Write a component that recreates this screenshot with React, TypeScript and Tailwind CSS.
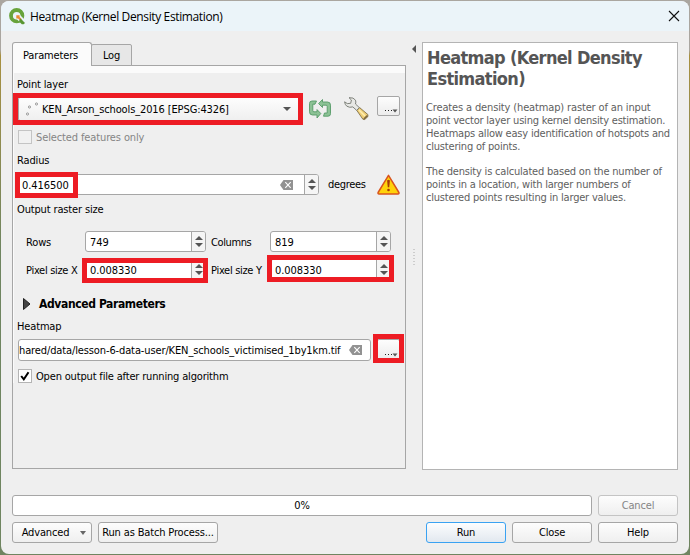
import type { ReactNode } from 'react';

const ui = "font-['DejaVu_Sans_Condensed','DejaVu_Sans',sans-serif] [font-stretch:condensed] tracking-[-0.15px]";
const btn = 'flex items-center justify-center h-[21px] rounded-[3px] border border-[#a6a6a6] bg-linear-to-b from-[#fdfdfd] to-[#efefef]';

function T({ children, className = '' }: { children: ReactNode; className?: string }) {
  return <span className={`whitespace-nowrap ${className}`}>{children}</span>;
}

function Mark({ className }: { className: string }) {
  return <div className={`absolute z-10 border-[5px] border-[#ed1c24] ${className}`} />;
}

function Spin({ value, clear, className }: { value: string; clear?: boolean; className: string }) {
  return (
    <div className={`relative flex h-[21px] rounded-[3px] border border-[#a6a6a6] bg-white ${className}`}>
      <div className="flex flex-1 items-center pt-px pl-1">
        <T className="tracking-[-0.05px]">{value}</T>
      </div>
      {clear && <div className="mr-[11px] flex items-center"><Clear /></div>}
      <div className="flex w-[14px] flex-col items-center justify-center gap-[3px] rounded-r-[2px] border-l border-[#a6a6a6] bg-[#f5f5f5]">
        <svg width="8" height="4"><path d="M0 4L4 0L8 4Z" fill="#555" /></svg>
        <svg width="8" height="4"><path d="M0 0L4 4L8 0Z" fill="#555" /></svg>
      </div>
    </div>
  );
}

function Clear() {
  return (
    <svg width="13" height="10" viewBox="0 0 13 10">
      <path d="M0 5L3.5 0H13V10H3.5Z" fill="#929292" />
      <path d="M5.3 2.2L10.7 7.8M10.7 2.2L5.3 7.8" stroke="#fff" strokeWidth="1.1" />
    </svg>
  );
}

function Dots({ className = '' }: { className?: string }) {
  return (
    <div className={`relative rounded-[2px] border border-[#a6a6a6] bg-linear-to-b from-[#fdfdfd] to-[#ececec] ${className}`}>
      <svg className="absolute right-[1px] bottom-[2px]" width="14" height="5">
        <path d="M1 2.5h1M4 2.5h1M7 2.5h1" stroke="#222" />
        <path d="M8.5 1.5h5L11 4.5Z" fill="#555" />
      </svg>
    </div>
  );
}

function Check({ on }: { on?: boolean }) {
  return (
    <div className={`flex size-[14px] items-center justify-center border ${on ? 'border-[#b4b4b4] bg-white' : 'border-[#c4c4c4] bg-[#f1f1f1]'}`}>
      {on && <svg width="10" height="10"><path d="M1.2 5L3.8 8.3L8.5 1.2" fill="none" stroke="#000" strokeWidth="2" /></svg>}
    </div>
  );
}

function Logo() {
  return (
    <svg width="17" height="17" viewBox="0 0 17 17">
      <circle cx="7.7" cy="7.7" r="5.7" fill="none" stroke="#67a33b" strokeWidth="3.8" />
      <path d="M7 7h4l6 6v3.5h-3.5L7 10.5Z" fill="#ebf3f9" />
      <path d="M7.3 7.3h3.3v1.8l2.2 2.2-1.5 1.5-2.2-2.2H7.3Z" fill="#e98a32" />
      <path d="M11.6 10.6l4.4 4.5-1.4 1.2h-1.8l-3-3Z" fill="#589632" />
    </svg>
  );
}

function Refresh() {
  return (
    <svg width="22" height="20" viewBox="0 0 22 20">
      <g fill="#8cc295" stroke="#559a66" strokeWidth=".9" strokeLinejoin="round">
        <path d="M7.5 2H3Q.5 2 .5 4.5V12.8Q.5 16 3.5 16H8V19L11.8 14.5L8 10.6V12.8H5Q3.8 12.8 3.8 11.6V5.2H6Z" />
        <path d="M14.5 17.2H19Q21.5 17.2 21.5 14.7V6.2Q21.5 3 18.5 3H13.5V.5L9.6 4.6L13.5 8.5V6.2H17Q18.2 6.2 18.2 7.4V14H15.5Z" />
      </g>
    </svg>
  );
}

function Wrench() {
  return (
    <svg width="25" height="24" viewBox="0 0 25 24">
      <path d="M12.8 13.4L15.6 10.6L23.9 17.6V19.6L20.8 22.4H19Z" fill="#f0d078" stroke="#80714d" strokeWidth=".9" strokeLinejoin="round" />
      <path d="M15 13L21 19" stroke="#ffeeb0" strokeWidth="1.6" />
      <path d="M19.8 22L23.5 18.6" stroke="#7d6840" strokeWidth="1.6" />
      <path d="M5 .7Q9.7 .2 11.5 3.2Q12.2 5 11.5 7L15.3 10.6L12.7 13.4L8.8 9.9Q5.6 11 2.8 9.2Q.8 7.6 .6 4.8L3.3 6.6L6.7 6.3L7.4 3Z" fill="#e7e8e5" stroke="#74776f" strokeWidth=".9" strokeLinejoin="round" />
    </svg>
  );
}

function Warning() {
  return (
    <svg width="23" height="21" viewBox="0 0 23 21">
      <path d="M11.5 1.3L21.9 18.5Q22.3 20 21 20H2Q.7 20 1.1 18.5Z" fill="#ffd20a" stroke="#d9541e" strokeWidth="1.5" strokeLinejoin="round" />
      <path d="M10.1 6.5Q11.5 5.2 12.9 6.5L12.2 13.3H10.8Z" fill="#a63b08" />
      <circle cx="11.5" cy="16" r="1.3" fill="#a63b08" />
    </svg>
  );
}

function Parameters() {
  return (
    <div className="relative h-[404px] w-[394px] border border-[#a6a6a6] bg-[#efefef]">
      <div className="h-[7px] bg-[#fbfbfb]" />
      <div className="flex flex-col border-l border-[#fbfbfb] pl-[3px]">
        <div className="flex h-[23px] items-center"><T>Point layer</T></div>
        <div className="flex h-[34px]">
          <div className="mt-[1px] ml-px flex h-[24px] w-[283px] items-center rounded-[2px] border border-[#a6a6a6] bg-linear-to-b from-[#fdfdfd] to-[#efefef]">
            <svg className="ml-[6px]" width="14" height="14" fill="#f5f5f5" stroke="#999">
              <circle cx="4.5" cy="5" r="1.1" /><circle cx="11.5" cy="2" r="1.1" /><circle cx="2.5" cy="12" r="1.1" />
            </svg>
            <T className="ml-[3px] tracking-[-0.12px]">KEN_Arson_schools_2016 [EPSG:4326]</T>
            <svg className="mr-[9px] ml-auto" width="8" height="4"><path d="M0 0h8L4 4Z" fill="#555" /></svg>
          </div>
          <div className="mt-[3px] ml-[8px]"><Refresh /></div>
          <div className="mt-[1px] ml-[13px]"><Wrench /></div>
          <Dots className="ml-[8px] h-[20px] w-[23px]" />
        </div>
        <div className="flex h-[14px] items-center gap-[4px] pl-px text-[#858585]"><Check /><T className="tracking-[-0.12px]">Selected features only</T></div>
        <div className="flex h-[30px] items-end pb-[7px]"><T>Radius</T></div>
        <div className="flex h-[22px] items-start">
          <Spin value="0.416500" clear className="w-[302px]" />
          <T className="mt-[4px] ml-[9px] w-[49px] tracking-[-0.3px]">degrees</T>
          <Warning />
        </div>
        <div className="flex h-[26px] items-center"><T>Output raster size</T></div>
        <div className="mt-[9px] flex h-[21px] items-center pl-[9px]">
          <T className="w-[59px] pt-px">Rows</T><Spin value="749" className="w-[121px]" />
          <T className="ml-[5px] w-[59px] pt-px tracking-[-0.4px]">Columns</T><Spin value="819" className="w-[121px]" />
        </div>
        <div className="mt-[7px] flex h-[21px] items-center pl-[9px]">
          <T className="w-[59px] pt-px tracking-[-0.3px]">Pixel size X</T><Spin value="0.008330" className="w-[121px]" />
          <T className="ml-[5px] w-[59px] pt-px tracking-[-0.3px]">Pixel size Y</T><Spin value="0.008330" className="w-[121px]" />
        </div>
        <div className="mt-[12px] flex h-[24px] items-center pl-[6px] font-bold">
          <svg width="8" height="12"><path d="M.5 .5L7 6L.5 11.5Z" fill="#444" stroke="#222" /></svg>
          <T className="ml-[8px] text-[12px] tracking-[-0.38px]">Advanced Parameters</T>
        </div>
        <div className="flex h-[22px] items-center pb-px"><T>Heatmap</T></div>
        <div className="mt-px flex h-[22px]">
          <div className="ml-px flex w-[353px] items-center overflow-hidden rounded-[3px] border border-[#a6a6a6] bg-white">
            <T className="tracking-[-0.12px]">hared/data/lesson-6-data-user/KEN_schools_victimised_1by1km.tif</T>
            <div className="mr-[8px] ml-auto"><Clear /></div>
          </div>
          <Dots className="ml-[6px] h-[21px] w-[23px]" />
        </div>
        <div className="mt-[8px] flex h-[14px] items-center gap-[4px] pl-px"><Check on /><T className="tracking-[-0.17px]">Open output file after running algorithm</T></div>
      </div>
      <Mark className="top-[27px] left-0 h-[32px] w-[290px]" />
      <Mark className="top-[106px] left-[2px] h-[26px] w-[63px]" />
      <Mark className="top-[192px] left-[69px] h-[25px] w-[126px]" />
      <Mark className="top-[189px] left-[254px] h-[27px] w-[127px]" />
      <Mark className="top-[268px] left-[360px] h-[29px] w-[31px]" />
    </div>
  );
}

export default function App() {
  return (
    <div className="h-[555px] w-[690px] overflow-hidden bg-linear-to-b from-[#aaa6a0] from-9% via-[#a8903f] via-10% to-[#6f8560] to-45% pt-px pl-px">
      <div className={`flex h-[553px] w-[688px] flex-col overflow-hidden rounded-[8px] bg-[#efefef] text-[11px] leading-[13px] text-black ${ui}`}>
        <header className="flex h-[30px] items-center bg-[#ebf4f9] pr-[9px] pl-[8px]">
          <Logo />
          <T className="ml-[4px] font-['Open_Sans',sans-serif] text-[12px] tracking-[-0.37px] [font-stretch:normal]">Heatmap (Kernel Density Estimation)</T>
          <svg className="ml-auto" width="12" height="12"><path d="M1 1L11 11M11 1L1 11" stroke="#111" strokeWidth="1.1" /></svg>
        </header>
        <div className="flex h-[439px] pt-[11px] pl-[11px]">
          <div className="flex w-[394px] flex-col">
            <div className="relative z-10 -mb-px flex h-[24px] items-end">
              <div className="flex h-[24px] w-[80px] items-center rounded-t-[3px] border border-b-0 border-[#a6a6a6] bg-[#fbfbfb] pt-px pl-[10px]"><T>Parameters</T></div>
              <div className="-ml-px flex h-[22px] w-[41px] items-center justify-center rounded-t-[2px] border border-[#a6a6a6] bg-[#e7e7e7] pt-px"><T>Log</T></div>
            </div>
            <Parameters />
          </div>
          <div className="flex w-[16px] flex-col items-center pt-[3px]">
            <svg width="4" height="8"><path d="M4 0V8L0 4Z" fill="#555" /></svg>
            <svg className="mt-[196px]" width="2" height="18"><path d="M1 0V18" stroke="#aaa" strokeDasharray="1 2" /></svg>
          </div>
          <div className="h-[428px] w-[256px] border border-[#b4b4b4] bg-white pt-[4px] pl-[3px] text-[#606060]">
            <h1 className="pl-px text-[18px] leading-[21px] font-bold tracking-[-0.66px] text-[#555]"><T>Heatmap (Kernel Density</T><br /><T>Estimation)</T></h1>
            <p className="mt-[12px] tracking-[-0.2px]">
              <T className="tracking-[-0.14px]">Creates a density (heatmap) raster of an input</T><br />
              <T>point vector layer using kernel density estimation.</T><br />
              <T>Heatmaps allow easy identification of hotspots and</T><br />
              <T>clustering of points.</T>
            </p>
            <p className="mt-[12px] tracking-[-0.2px]">
              <T>The density is calculated based on the number of</T><br />
              <T>points in a location, with larger numbers of</T><br />
              <T>clustered points resulting in larger values.</T>
            </p>
          </div>
        </div>
        <footer className="flex flex-col gap-[6px] pt-[25px] pr-[11px] pl-[11px]">
          <div className="flex gap-[6px]">
            <div className="flex h-[21px] w-[580px] items-center justify-center rounded-[3px] border border-[#a6a6a6] bg-white"><T>0%</T></div>
            <div className={`${btn} w-[80px] border-[#c4c4c4]! text-[#858585]`}><T>Cancel</T></div>
          </div>
          <div className="flex gap-[6px]">
            <div className={`${btn} w-[80px]`}>
              <T>Advanced</T>
              <svg className="ml-[11px] -mr-[4px]" width="6" height="4"><path d="M0 0h6L3 4Z" fill="#666" /></svg>
            </div>
            <div className={`${btn} w-[120px]`}><T>Run as Batch Process...</T></div>
            <div className="ml-auto flex h-[21px] w-[80px] items-center justify-center rounded-[3px] border border-[#3aa2f2] bg-linear-to-b from-[#fcfdfe] to-[#e2e8ef]"><T>Run</T></div>
            <div className={`${btn} w-[80px]`}><T>Close</T></div>
            <div className={`${btn} w-[80px]`}><T>Help</T></div>
          </div>
        </footer>
      </div>
    </div>
  );
}
